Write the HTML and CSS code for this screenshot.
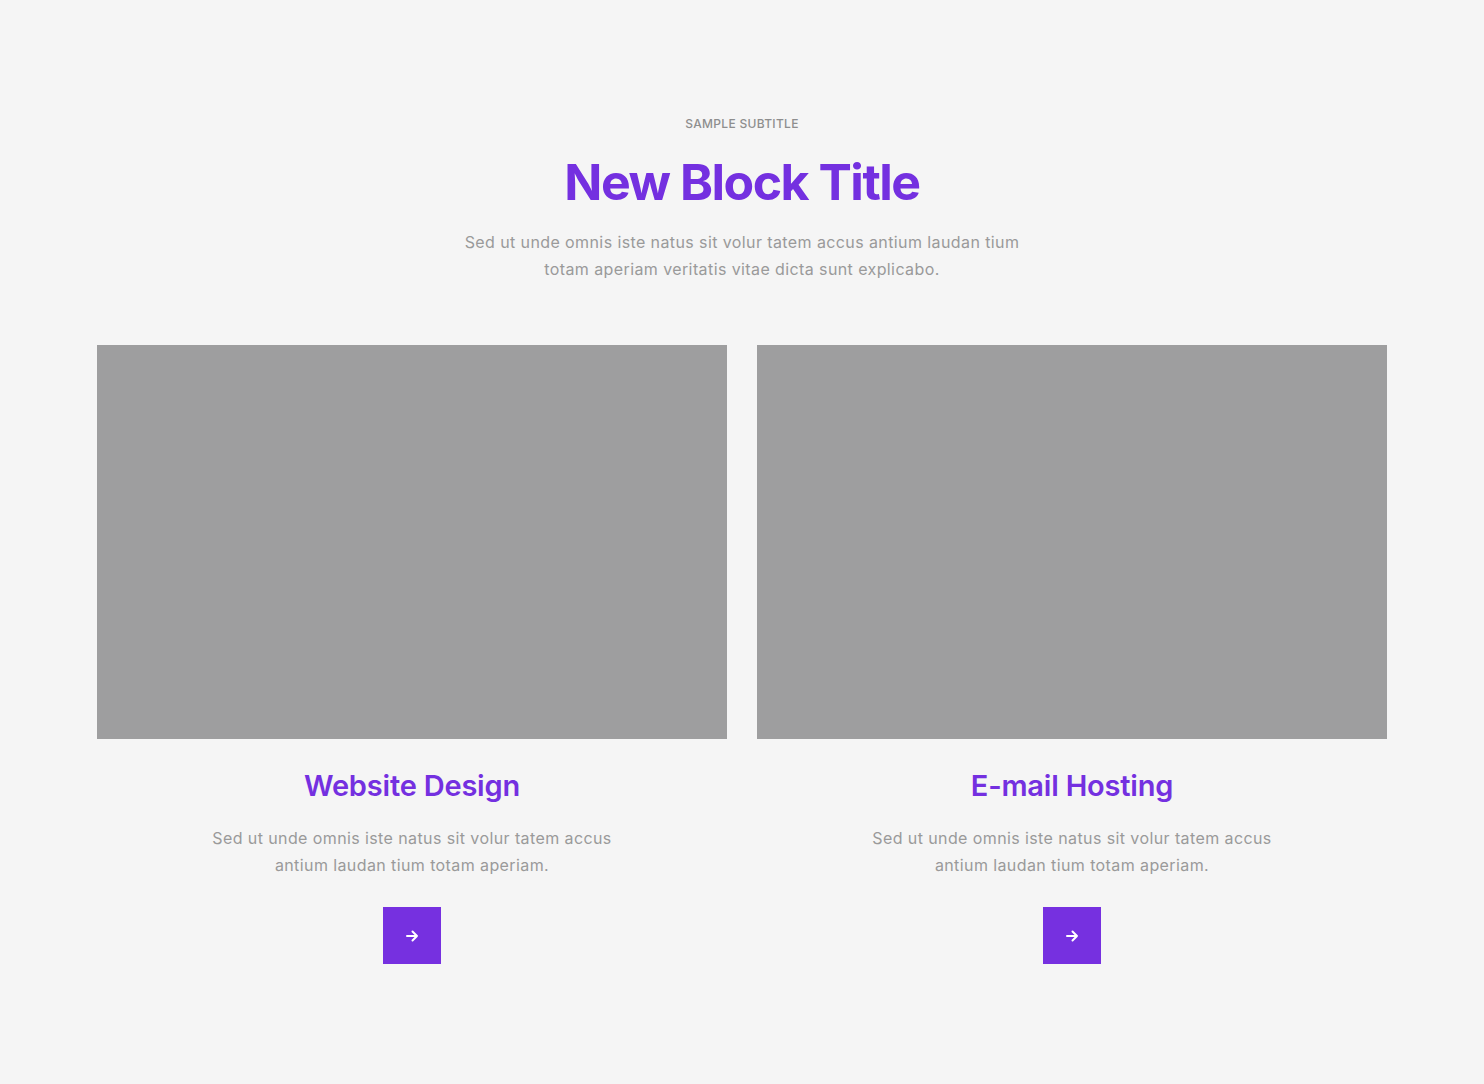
FILE: index.html
```html
<!DOCTYPE html>
<html lang="en">
<head>
<meta charset="utf-8">
<title>New Block Title</title>
<link rel="stylesheet" href="styles.css">
</head>
<body>
<section class="block">
  <header class="head">
    <p class="subtitle">SAMPLE SUBTITLE</p>
    <h1 class="title">New Block Title</h1>
    <p class="lead">Sed ut unde omnis iste natus sit volur tatem accus antium laudan tium<br>totam aperiam veritatis vitae dicta sunt explicabo.</p>
  </header>
  <div class="cards">
    <article class="card">
      <div class="thumb"></div>
      <h2 class="card-title">Website Design</h2>
      <p class="card-text">Sed ut unde omnis iste natus sit volur tatem accus<br>antium laudan tium totam aperiam.</p>
      <a class="btn" href="#" aria-label="More">
        <svg width="14" height="14" viewBox="0 0 14 14" fill="none" stroke="#fff" stroke-width="2" stroke-linecap="round" stroke-linejoin="round"><path d="M2 7h10M7.5 2.5L12 7l-4.5 4.5"/></svg>
      </a>
    </article>
    <article class="card">
      <div class="thumb"></div>
      <h2 class="card-title">E-mail Hosting</h2>
      <p class="card-text">Sed ut unde omnis iste natus sit volur tatem accus<br>antium laudan tium totam aperiam.</p>
      <a class="btn" href="#" aria-label="More">
        <svg width="14" height="14" viewBox="0 0 14 14" fill="none" stroke="#fff" stroke-width="2" stroke-linecap="round" stroke-linejoin="round"><path d="M2 7h10M7.5 2.5L12 7l-4.5 4.5"/></svg>
      </a>
    </article>
  </div>
</section>
</body>
</html>
```
FILE: styles.css
```css
html, body {
  margin: 0;
  padding: 0;
  background: #f5f5f5;
}
body {
  font-family: "Inter", "Noto Sans", sans-serif;
  color: #9a9a9a;
}
.block {
  width: 1290px;
  margin: 0 auto;
  padding: 115px 0 120px;
}
.head {
  text-align: center;
}
.subtitle {
  margin: 0;
  font-size: 12px;
  line-height: 18px;
  font-weight: 500;
  color: #8e8e8e;
  letter-spacing: 0.3px;
}
.title {
  margin: 19px 0 0;
  font-size: 50px;
  line-height: 60px;
  font-weight: 700;
  letter-spacing: -1.5px;
  color: #7430e0;
}
.lead {
  margin: 17px 0 0;
  font-size: 16px;
  line-height: 27px;
  letter-spacing: 0.4px;
  color: #9a9a9a;
}
.cards {
  display: grid;
  grid-template-columns: 630px 630px;
  gap: 30px;
  margin-top: 62px;
}
.card {
  display: flex;
  flex-direction: column;
  align-items: center;
  text-align: center;
}
.thumb {
  width: 630px;
  height: 394px;
  background: #9e9e9f;
}
.card-title {
  margin: 28px 0 0;
  font-size: 29px;
  line-height: 38px;
  font-weight: 600;
  letter-spacing: -0.2px;
  color: #7430e0;
}
.card-text {
  margin: 20px 0 0;
  font-size: 16px;
  line-height: 27px;
  letter-spacing: 0.4px;
  color: #9a9a9a;
}
.btn {
  margin-top: 28px;
  width: 58px;
  height: 57px;
  background: #7630e0;
  display: flex;
  align-items: center;
  justify-content: center;
}
```
